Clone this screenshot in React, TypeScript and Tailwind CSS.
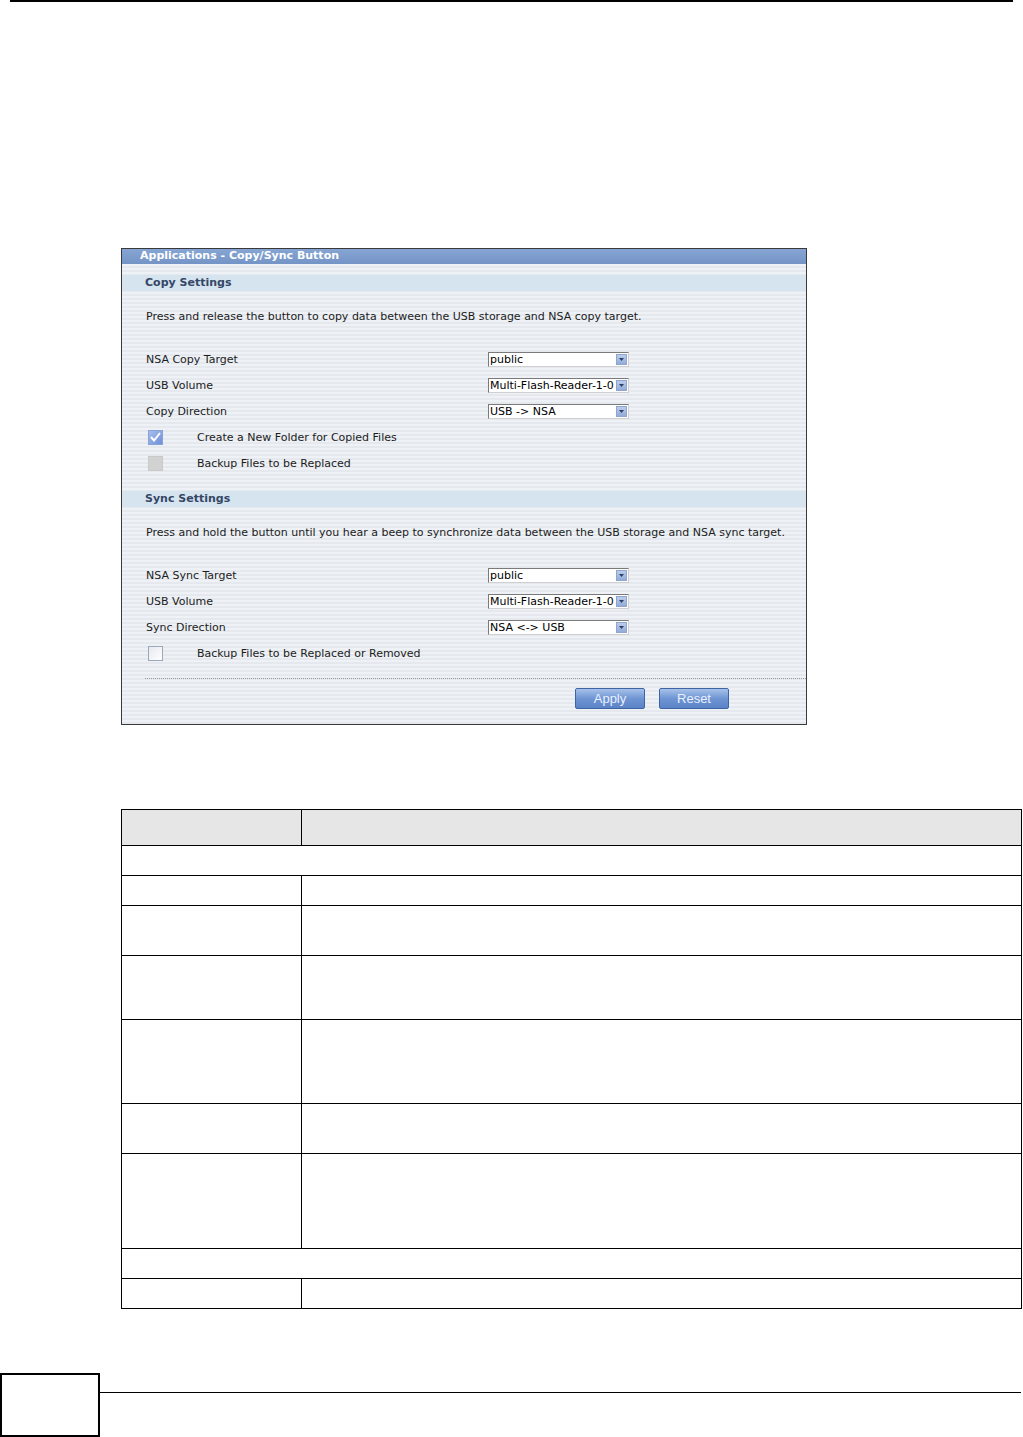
import React from "react";

const stripes =
  "bg-[repeating-linear-gradient(180deg,#eef1f5_0px,#eef1f5_2px,#e5e9ee_2px,#e5e9ee_4px)]";

function Select({ value }: { value: string }) {
  return (
    <div className="flex h-[15px] w-[141px] items-center border border-[#7a7a7a] border-r-[#d0d0d0] border-b-[#d0d0d0] bg-white pl-[1px]">
      <span className="flex-1 overflow-hidden whitespace-nowrap text-[11px] leading-[13px] text-black">
        {value}
      </span>
      <span className="mr-[1px] flex h-[11px] w-[11px] shrink-0 items-center justify-center border border-[#8ea6cf] bg-gradient-to-b from-[#bccdeb] to-[#93abd8]">
        <svg width="5" height="3" viewBox="0 0 5 3">
          <path d="M0 0 L5 0 L2.5 3 Z" fill="#2b3f6b" />
        </svg>
      </span>
    </div>
  );
}

function Row({ label, value }: { label: string; value: string }) {
  return (
    <div className="flex h-[26px] items-center">
      <div className="w-[366px] pl-[24px] pt-[2px]">{label}</div>
      <Select value={value} />
    </div>
  );
}

function Check({ kind, label }: { kind: "checked" | "disabled" | "empty"; label: string }) {
  let box: React.ReactNode;
  if (kind === "checked") {
    box = (
      <span className="flex h-[15px] w-[15px] items-center justify-center border border-[#8aa3d6] bg-gradient-to-br from-[#a9bdee] to-[#6e8fd8]">
        <svg width="11" height="10" viewBox="0 0 11 10">
          <path d="M1 5 L4 8.5 L10 1" stroke="#ffffff" strokeWidth="2" fill="none" />
        </svg>
      </span>
    );
  } else if (kind === "disabled") {
    box = <span className="block h-[15px] w-[15px] border border-[#c9c9c9] bg-[#d2d2d2]" />;
  } else {
    box = (
      <span className="block h-[15px] w-[15px] border border-[#9aa8be] bg-gradient-to-br from-[#e6e9ee] to-[#ffffff]" />
    );
  }
  return (
    <div className="flex h-[26px] items-center">
      <div className="w-[75px] pl-[26px]">{box}</div>
      <div className="pt-[2px]">{label}</div>
    </div>
  );
}

function SectionBar({ title }: { title: string }) {
  return (
    <div className="flex h-[16px] items-center bg-[#d5e4ee] pl-[23px] text-[11px] font-bold text-[#344766]">
      {title}
    </div>
  );
}

function Btn({ label }: { label: string }) {
  return (
    <div className="flex h-[21px] w-[70px] items-center justify-center rounded-[2px] border border-[#3f64a5] bg-gradient-to-b from-[#a7c2ea] via-[#6f95d3] to-[#5b83c6] font-['Liberation_Sans',sans-serif] text-[13px] text-[#e9f0ff]">
      {label}
    </div>
  );
}

function Panel() {
  return (
    <div className="ml-[121px] w-[686px] border border-[#3a3a3a] font-['DejaVu_Sans',sans-serif] text-[11px] text-[#1c1c1c]">
      <div className="flex h-[15px] items-center bg-gradient-to-b from-[#86a5d3] to-[#7494c6] pl-[18px] text-[11px] font-bold text-white">
        Applications - Copy/Sync Button
      </div>
      <div className={stripes}>
        <div className="h-[11px]" />
        <SectionBar title="Copy Settings" />
        <div className="h-[15px]" />
        <div className="flex h-[22px] items-center whitespace-nowrap pl-[24px]">
          Press and release the button to copy data between the USB storage and NSA copy target.
        </div>
        <div className="h-[18px]" />
        <Row label="NSA Copy Target" value="public" />
        <Row label="USB Volume" value="Multi-Flash-Reader-1-0" />
        <Row label="Copy Direction" value="USB -> NSA" />
        <Check kind="checked" label="Create a New Folder for Copied Files" />
        <Check kind="disabled" label="Backup Files to be Replaced" />
        <div className="h-[15px]" />
        <SectionBar title="Sync Settings" />
        <div className="h-[15px]" />
        <div className="flex h-[22px] items-center whitespace-nowrap pl-[24px]">
          Press and hold the button until you hear a beep to synchronize data between the USB storage and NSA sync target.
        </div>
        <div className="h-[18px]" />
        <Row label="NSA Sync Target" value="public" />
        <Row label="USB Volume" value="Multi-Flash-Reader-1-0" />
        <Row label="Sync Direction" value="NSA <-> USB" />
        <Check kind="empty" label="Backup Files to be Replaced or Removed" />
        <div className="h-[12px]" />
        <div className="ml-[23px] border-t border-dotted border-[#9a9a9a]" />
        <div className="flex h-[45px] items-start gap-[14px] pl-[453px] pt-[9px]">
          <Btn label="Apply" />
          <Btn label="Reset" />
        </div>
      </div>
    </div>
  );
}

function Table() {
  const rows: { full?: boolean; h: number }[] = [
    { full: true, h: 30 },
    { h: 30 },
    { h: 50 },
    { h: 64 },
    { h: 84 },
    { h: 50 },
    { h: 95 },
    { full: true, h: 30 },
    { h: 30 },
  ];
  return (
    <div className="ml-[121px] w-[901px] border-l border-t border-black">
      <div className="flex h-[36px] bg-[#e6e6e6]">
        <div className="w-[180px] border-b border-r border-black" />
        <div className="flex-1 border-b border-r border-black" />
      </div>
      {rows.map((r, i) =>
        r.full ? (
          <div key={i} className="border-b border-r border-black" style={{ height: r.h }} />
        ) : (
          <div key={i} className="flex" style={{ height: r.h }}>
            <div className="w-[180px] border-b border-r border-black" />
            <div className="flex-1 border-b border-r border-black" />
          </div>
        )
      )}
    </div>
  );
}

export default function App() {
  return (
    <div className="relative h-[1437px] w-[1023px] overflow-hidden bg-white">
      <div className="ml-[10px] mr-[10px] h-[2px] bg-black" />
      <div className="h-[246px]" />
      <Panel />
      <div className="h-[84px]" />
      <Table />
      <div className="absolute left-0 top-[1373px] flex w-[1021px] items-start">
        <div className="h-[64px] w-[100px] border-2 border-black" />
        <div className="mt-[19px] h-[1px] flex-1 bg-black" />
      </div>
    </div>
  );
}
